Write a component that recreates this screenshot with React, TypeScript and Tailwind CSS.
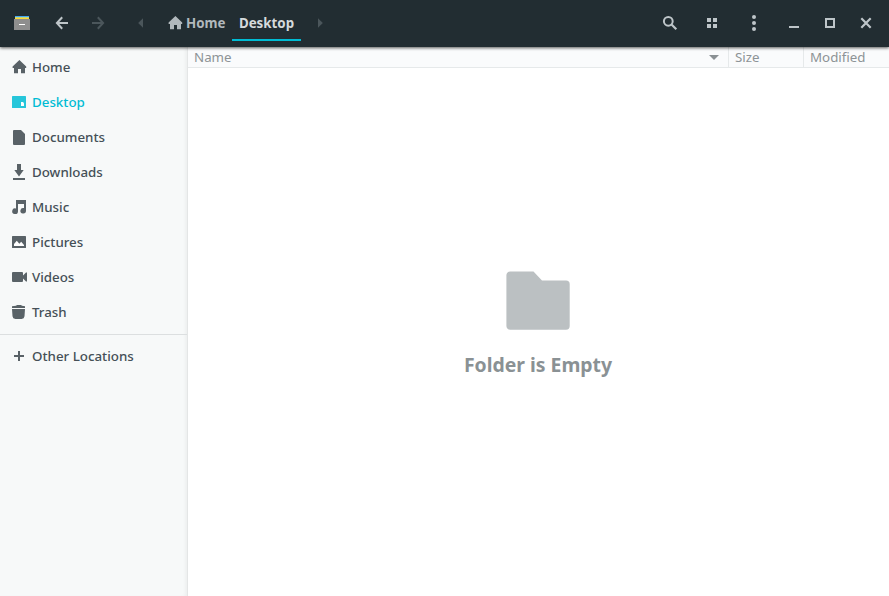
import type { ReactNode } from "react";

function Glyph({ children, className = "" }: { children: ReactNode; className?: string }) {
  return (
    <svg viewBox="0 0 16 16" fill="currentColor" className={`h-4 w-4 shrink-0 ${className}`}>
      {children}
    </svg>
  );
}

const homePath = "M8.4 1 15.2 7.6V9H14V14.2H10V10H7V14.2H3V9H1.6V7.6Z";

const places: { label: string; icon: ReactNode; active?: boolean }[] = [
  { label: "Home", icon: <path d={homePath} /> },
  {
    label: "Desktop",
    active: true,
    icon: (
      <>
        <rect x="1" y="2" width="14" height="12" rx="0.6" />
        <path d="M10 8h2l1 1.2V12h-3z" fill="#fff" />
      </>
    ),
  },
  { label: "Documents", icon: <path d="M3 1h7l4 4v10a1 1 0 0 1-1 1H3a1 1 0 0 1-1-1V2a1 1 0 0 1 1-1z" /> },
  { label: "Downloads", icon: <path d="M6 0h4v6h2.7L8 12.6 3.3 6H6zM2 14h12v2H2z" /> },
  {
    label: "Music",
    icon: <path d="M5 1h10v10.8a2.8 2.8 0 1 1-2-2.7V5H7v7.2a2.9 2.9 0 1 1-2-2.8z" />,
  },
  {
    label: "Pictures",
    icon: (
      <>
        <rect x="1" y="2" width="14" height="12" rx="0.6" />
        <path d="M3 12V10l2.8-3.3 2.5 3 1.9-1.9L13 11v1z" fill="#fff" />
      </>
    ),
  },
  { label: "Videos", icon: <path d="M2 3h9a1 1 0 0 1 1 1v2.500l3-3h1v9h-1l-3-3V12a1 1 0 0 1-1 1H2a1 1 0 0 1-1-1V4a1 1 0 0 1 1-1z" /> },
  { label: "Trash", icon: <path d="M1 2.200l4-.4L6 1h4l1 .8 3 .4V4H1zM1 5h13l-.5 7.300A3 3 0 0 1 10.600 15H4.400a3 3 0 0 1-2.900-2.700z" /> },
];

function Place({ label, icon, active }: { label: string; icon: ReactNode; active?: boolean }) {
  return (
    <div className={`flex h-[35px] items-center gap-[5px] pb-px pl-[11px] ${active ? "text-[#00bcd4]" : "text-[#455057]"}`}>
      <Glyph className={active ? "text-[#26c6da]" : "text-[#596267]"}>{icon}</Glyph>
      <span>{label}</span>
    </div>
  );
}

export default function App() {
  return (
    <div className="flex h-[596px] w-[889px] flex-col overflow-hidden bg-white font-['Noto_Sans',sans-serif] text-[13.33px] leading-[18px] font-medium">
      <header className="z-10 flex h-[47px] shrink-0 items-center bg-[#222d32] pr-[15px] pb-px pl-[14px] text-[#bec5c9] shadow-[0_1px_3px_rgba(0,0,0,0.65)]">
        <Glyph>
          <path d="M1 1h14v1.500H1z" fill="#42a5f5" />
          <path d="M1 2h14v1H1z" fill="#b9d98b" />
          <path d="M1 2.800h14V5H1z" fill="#fdd835" />
          <path d="M0 4h16v11H0z" fill="#8e8e8e" />
          <path d="M5 9h6v1H5z" fill="#fff" />
        </Glyph>
        <Glyph className="ml-6">
          <path d="M8.2 2.3 2.9 8l5.3 5.7M3 8h11" fill="none" stroke="currentColor" strokeWidth="2" />
        </Glyph>
        <Glyph className="ml-5 text-[#4b565b]">
          <path d="M7.8 2.3 13.1 8l-5.3 5.7M13 8H2" fill="none" stroke="currentColor" strokeWidth="2" />
        </Glyph>
        <Glyph className="ml-[27px] text-[#4b565b]">
          <path d="M10 3.2v9.6L5.2 8z" />
        </Glyph>
        <div className="ml-[18px] flex w-[65px] items-center gap-[3px] font-bold text-[#b1b8bc]">
          <Glyph>
            <path d={homePath} />
          </Glyph>
          <span>Home</span>
        </div>
        <div className="flex h-[36px] w-[69px] items-center justify-center border-b-2 border-[#00bcd4] pt-px font-bold text-[#d5dadc]">
          <span>Desktop</span>
        </div>
        <Glyph className="ml-[11px] text-[#4b565b]">
          <path d="M6 3.2v9.6L10.8 8z" />
        </Glyph>
        <div className="ml-auto flex gap-[26px]">
          <Glyph>
            <circle cx="6.3" cy="6.3" r="4.4" fill="none" stroke="currentColor" strokeWidth="2" />
            <path d="m9.5 9.5 4.8 4.8" stroke="currentColor" strokeWidth="2.2" />
          </Glyph>
          <Glyph>
            <path d="M3 3h4v4H3zM9 3h4v4H9zM3 9h4v4H3zM9 9h4v4H9z" />
          </Glyph>
          <Glyph>
            <circle cx="8" cy="2" r="2" />
            <circle cx="8" cy="8" r="2" />
            <circle cx="8" cy="14" r="2" />
          </Glyph>
        </div>
        <div className="ml-6 flex gap-5">
          <Glyph>
            <path d="M3 11h10v2H3z" />
          </Glyph>
          <Glyph>
            <path d="M4 4h8v8H4z" fill="none" stroke="currentColor" strokeWidth="2" />
          </Glyph>
          <Glyph>
            <path d="m3.3 3.3 9.4 9.4m0-9.4-9.4 9.4" stroke="currentColor" strokeWidth="2.2" />
          </Glyph>
        </div>
      </header>
      <div className="flex min-h-0 flex-1">
        <aside className="w-[188px] shrink-0 bg-[#f7f9f9] pt-[3px] shadow-[inset_-1px_0_0_#e4e6e6,inset_-4px_0_4px_-2px_rgba(0,0,0,0.06)]">
          {places.map((p) => (
            <Place key={p.label} {...p} />
          ))}
          <div className="mt-1 mb-1 h-px w-[187px] bg-[#dcdfe0]" />
          <Place label="Other Locations" icon={<path d="M7 3h2v4h4v2H9v4H7V9H3V7h4z" />} />
        </aside>
        <main className="flex flex-1 flex-col">
          <div className="flex h-[21px] shrink-0 border-b border-[#e6e9ea] bg-[#fafbfc] font-normal text-[#8d9396]">
            <div className="flex w-[541px] items-center justify-between border-r border-[#e6e9ea] pr-[9px] pl-[6px]">
              <span>Name</span>
              <svg viewBox="0 0 10 5" className="h-[5px] w-[10px]">
                <path d="M0 0h10L5 5z" fill="#8a9093" />
              </svg>
            </div>
            <div className="flex w-[75px] items-center border-r border-[#e6e9ea] pl-[6px]">Size</div>
            <div className="flex items-center pl-[6px]">Modified</div>
          </div>
          <div className="flex flex-1 flex-col items-center pt-[203px] pr-px">
            <svg viewBox="0 0 64 59" className="h-[59px] w-16">
              <path d="M4.300 .4h23.200l8.500 9H60a3.700 3.700 0 0 1 3.700 3.700V55a3.700 3.700 0 0 1-3.700 3.700H4.300A3.700 3.700 0 0 1 .4 55V4.100A3.700 3.700 0 0 1 4.300 .4z" fill="#bbc0c2" />
            </svg>
            <div className="mt-[21px] text-[19.4px] leading-7 font-bold text-[#8a9194]">Folder is Empty</div>
          </div>
        </main>
      </div>
    </div>
  );
}
